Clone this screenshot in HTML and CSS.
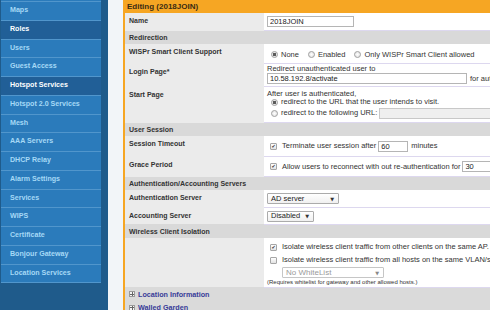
FILE: index.html
```html
<!DOCTYPE html>
<html lang="en">
    <head>
        <title>Hotspot Services - Editing</title>
        <meta charset="utf-8">
        <meta name="viewport" content="width=device-width, initial-scale=1">
        <link rel="stylesheet" href="styles.css">
    </head>
    <body>
        <div class="page">

            <div class="side">
                <ul class="menu">
                    <li><a href="#">Maps</a></li>
                    <li class="active"><a href="#">Roles</a></li>
                    <li><a href="#">Users</a></li>
                    <li><a href="#">Guest Access</a></li>
                    <li class="active"><a href="#">Hotspot Services</a></li>
                    <li><a href="#">Hotspot 2.0 Services</a></li>
                    <li><a href="#">Mesh</a></li>
                    <li><a href="#">AAA Servers</a></li>
                    <li><a href="#">DHCP Relay</a></li>
                    <li><a href="#">Alarm Settings</a></li>
                    <li><a href="#">Services</a></li>
                    <li><a href="#">WIPS</a></li>
                    <li><a href="#">Certificate</a></li>
                    <li><a href="#">Bonjour Gateway</a></li>
                    <li><a href="#">Location Services</a></li>
                </ul>
            </div>

            <div class="gutter"></div>

            <div class="content">
                <div class="head">Editing (2018JOIN)</div>
                <table class="form">
                    <colgroup><col class="col-label"><col></colgroup>
                    <tr>
                        <td class="lbl">Name</td>
                        <td class="val"><div class="line h11"><input class="txt w-name" type="text" value="2018JOIN"></div></td>
                    </tr>
                    <tr class="sec"><td colspan="2">Redirection</td></tr>
                    <tr>
                        <td class="lbl">WISPr Smart Client Support</td>
                        <td class="val wispr">
                            <div class="line h13">
                                <span class="radio on"></span><span class="opt">None</span>
                                <span class="radio"></span><span class="opt">Enabled</span>
                                <span class="radio"></span><span class="opt">Only WISPr Smart Client allowed</span>
                            </div>
                        </td>
                    </tr>
                    <tr>
                        <td class="lbl">Login Page*</td>
                        <td class="val tight">
                            <div class="note">Redirect unauthenticated user to</div>
                            <div class="line h11"><input class="txt w-login" type="text" value="10.58.192.8/activate"><span class="after">for authentication</span></div>
                        </td>
                    </tr>
                    <tr>
                        <td class="lbl">Start Page</td>
                        <td class="val start">
                            <div class="note">After user is authenticated,</div>
                            <div class="line h8"><span class="radio on"></span>redirect to the URL that the user intends to visit.</div>
                            <div class="line h14"><span class="radio"></span>redirect to the following URL:<input class="txt w-url off" type="text" disabled></div>
                        </td>
                    </tr>
                    <tr class="sec"><td colspan="2">User Session</td></tr>
                    <tr>
                        <td class="lbl">Session Timeout</td>
                        <td class="val">
                            <div class="line h14"><span class="check">&#10004;</span>Terminate user session after<input class="txt w-min" type="text" value="60"><span class="after">minutes</span></div>
                        </td>
                    </tr>
                    <tr>
                        <td class="lbl">Grace Period</td>
                        <td class="val">
                            <div class="line h13"><span class="check">&#10004;</span>Allow users to reconnect with out re-authentication for<input class="txt w-grace" type="text" value="30"><span class="after">minutes</span></div>
                        </td>
                    </tr>
                    <tr class="sec"><td colspan="2">Authentication/Accounting Servers</td></tr>
                    <tr>
                        <td class="lbl">Authentication Server</td>
                        <td class="val">
                            <div class="line h11"><span class="sel w-auth">AD server<span class="arrow">&#9660;</span></span></div>
                        </td>
                    </tr>
                    <tr>
                        <td class="lbl">Accounting Server</td>
                        <td class="val acct">
                            <div class="line h12"><span class="sel w-acct">Disabled<span class="arrow">&#9660;</span></span></div>
                        </td>
                    </tr>
                    <tr class="sec"><td colspan="2">Wireless Client Isolation</td></tr>
                    <tr>
                        <td class="lbl"></td>
                        <td class="val iso">
                            <div class="line h13"><span class="check">&#10004;</span>Isolate wireless client traffic from other clients on the same AP.</div>
                            <div class="line h13"><span class="check"></span>Isolate wireless client traffic from all hosts on the same VLAN/subnet.</div>
                            <div class="line h12 indent"><span class="sel w-white off">No WhiteList<span class="arrow">&#9660;</span></span></div>
                            <div class="small">(Requires whitelist for gateway and other allowed hosts.)</div>
                        </td>
                    </tr>
                    <tr class="fold"><td colspan="2"><span class="plus"></span><a href="#">Location Information</a></td></tr>
                    <tr class="fold"><td colspan="2"><span class="plus"></span><a href="#">Walled Garden</a></td></tr>
                </table>
            </div>

        </div>
    </body>
</html>
```

FILE: styles.css
```css
* {
    box-sizing: border-box;
}
body {
    margin: 0;
    font-family: "Liberation Sans", Arial, sans-serif;
    color: #333;
    background-color: #f2f5f8;
    overflow: hidden;
}
.page {
    display: flex;
    height: 310px;
}
/* Side navigation */
.side {
    width: 108px;
    flex: none;
    background-color: #1f5b8b;
}
.menu {
    list-style-type: none;
    margin: 0 0 0 1px;
    padding: 1px 0 0;
    width: 100px;
    background-color: #2b7bbb;
}
.menu li {
    border-top: 1px solid #5196cc;
}
.menu li:last-child {
    border-bottom: 1px solid #5196cc;
}
.menu a {
    display: block;
    height: 17.76px;
    line-height: 17.76px;
    padding-left: 9px;
    font-size: 7.1px;
    font-weight: bold;
    color: #a6d9f6;
    text-decoration: none;
}
.menu li.active a {
    background-color: #215f97;
    color: white;
}
.gutter {
    width: 15px;
    flex: none;
}
/* Edit panel */
.content {
    flex: none;
    width: 620px;
    border-left: 2px solid #f6a623;
    background-color: #ebebeb;
}
.head {
    height: 13px;
    line-height: 13px;
    padding-left: 2px;
    background-color: #f6a623;
    color: #3a2c14;
    font-size: 8px;
    font-weight: bold;
}
.form {
    width: 100%;
    border-collapse: collapse;
    table-layout: fixed;
}
.col-label {
    width: 139px;
}
.form td {
    padding: 0;
}
.form td.lbl {
    padding: 3px 4px 0;
    vertical-align: top;
    background-color: #ebebeb;
    font-size: 7px;
    font-weight: bold;
    line-height: 9px;
    color: #333;
}
.form td.val {
    padding: 3px 3px 3px;
    vertical-align: top;
    background-color: white;
    border-bottom: 1px solid #ddd8ef;
    font-size: 7.5px;
    line-height: 8px;
    white-space: nowrap;
}
.form td.wispr {
    padding: 4px 3px 2px;
}
.form td.tight {
    padding: 1px 3px 2px;
}
.form td.start {
    padding: 3px 3px 2px;
}
.form td.acct {
    padding: 2px 3px 1.5px;
}
.form td.iso {
    padding: 3px 3px 0;
}
.sec td {
    height: 13px;
    background-color: #d9d9d9;
    font-size: 7px;
    font-weight: bold;
    line-height: 8px;
    padding: 3px 4px 2px !important;
}
.fold td {
    height: 13.5px;
    background-color: #dadada;
    padding: 0 4px !important;
    font-size: 7.2px;
    font-weight: bold;
}
.fold a {
    color: #373c98;
    text-decoration: none;
    vertical-align: middle;
}
.plus {
    display: inline-block;
    width: 6px;
    height: 6px;
    margin-right: 3px;
    vertical-align: middle;
    border: 1px solid #9a9a9a;
    background:
        linear-gradient(#666, #666) center / 4px 1px no-repeat,
        linear-gradient(#666, #666) center / 1px 4px no-repeat,
        #f4f4f4;
}
/* Value lines */
.line {
    display: flex;
    align-items: center;
}
.h8 { height: 8px; }
.h11 { height: 11px; }
.h12 { height: 12px; }
.h13 { height: 13px; }
.h14 { height: 14px; }
.indent {
    padding-left: 15px;
}
.note {
    height: 8px;
}
.small {
    height: 8px;
    font-size: 6px;
    line-height: 7px;
}
.opt {
    margin-right: 5px;
}
.after {
    margin-left: 3px;
}
.radio {
    display: inline-block;
    flex: none;
    width: 7px;
    height: 7px;
    margin: 0 3px 0 4px;
    border: 1px solid #a2a2a2;
    border-radius: 50%;
    background: radial-gradient(circle, #ffffff, #dcdcdc);
}
.radio.on {
    background: radial-gradient(circle, #5a5a5a 0 1.4px, #e6e6e6 2px);
}
.check {
    display: inline-block;
    flex: none;
    width: 7px;
    height: 7px;
    margin: 0 5px 0 3px;
    border: 1px solid #a6a6a6;
    border-radius: 1px;
    background: linear-gradient(#ffffff, #e2e2e2);
    font-family: "DejaVu Sans", sans-serif;
    font-size: 5px;
    line-height: 5px;
    text-align: center;
    color: #333;
}
.txt {
    height: 11px;
    margin: 0 0 0 2px;
    padding: 0 2px;
    border: 1px solid #b5b5b5;
    border-radius: 0;
    background-color: white;
    font-family: "Liberation Sans", Arial, sans-serif;
    font-size: 7.5px;
    color: #222;
}
.line > .txt:first-child {
    margin-left: 0;
}
.txt.off {
    background-color: #efefef;
    border-color: #c8c8c8;
}
.w-name { width: 87px; }
.w-login { width: 200px; }
.w-url { width: 160px; }
.w-min { width: 30px; }
.w-grace { width: 40px; }
.sel {
    display: inline-flex;
    align-items: center;
    justify-content: space-between;
    height: 11px;
    padding: 0 4px 0 3px;
    border: 1px solid #ababab;
    border-radius: 1px;
    background: linear-gradient(#ffffff, #f0f0f0);
    color: #222;
}
.sel.off {
    height: 11.7px;
    border-color: #c6c6c6;
    background: white;
    color: #9a9a9a;
    font-size: 8px;
}
.arrow {
    font-family: "DejaVu Sans", sans-serif;
    font-size: 5px;
    color: #333;
}
.sel.off .arrow {
    color: #888;
}
.w-auth { width: 72px; }
.w-acct { width: 47px; }
.w-white { width: 102px; }
```
